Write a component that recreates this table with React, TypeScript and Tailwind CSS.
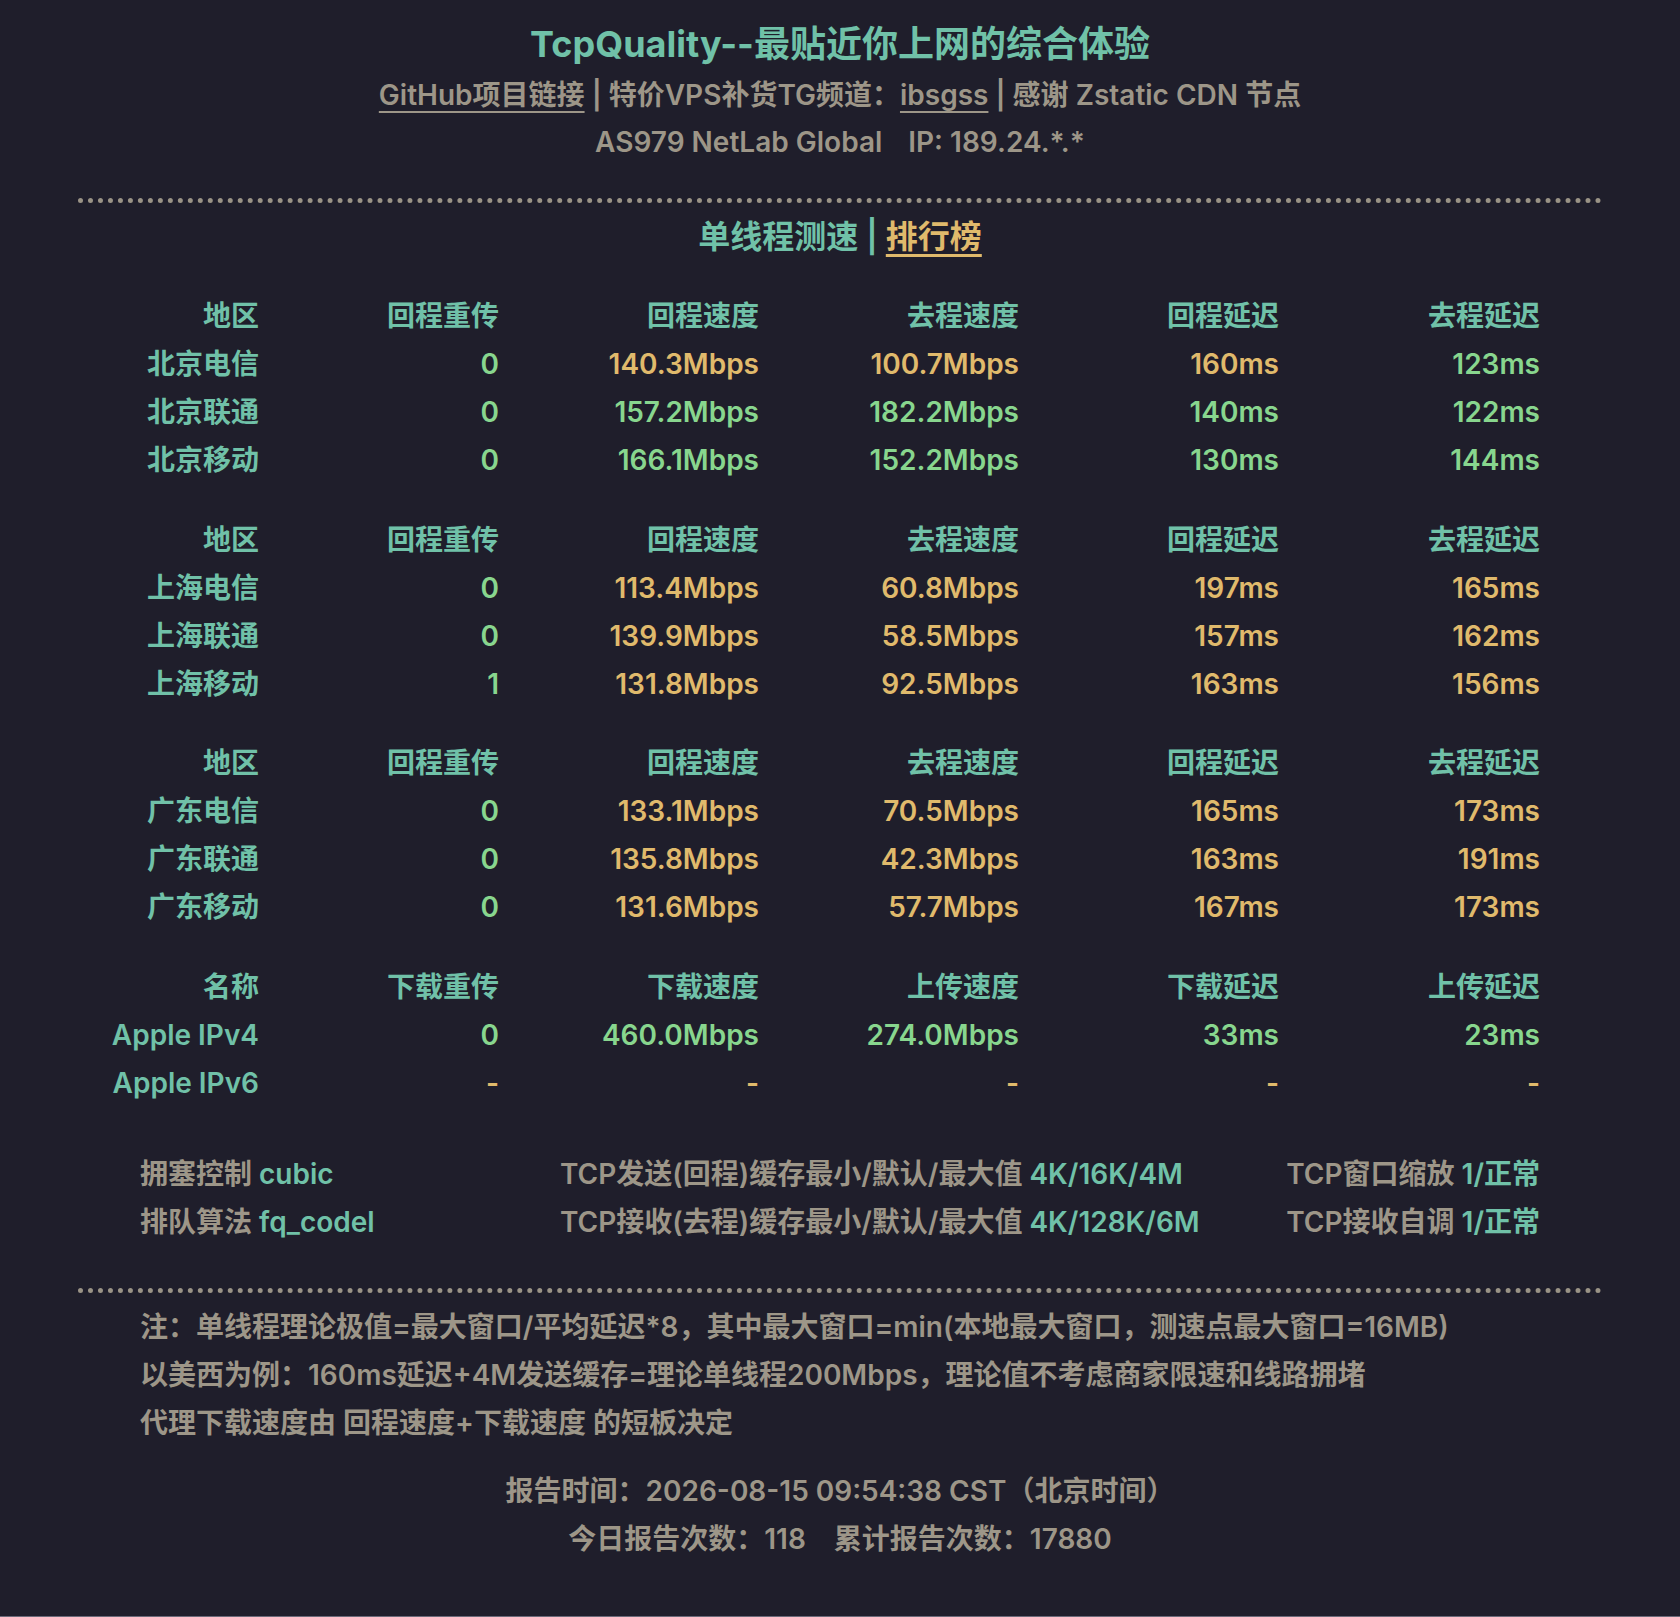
import React from 'react';

const TEAL = 'text-[#70c1a8]';
const GOLD = 'text-[#e0ba6c]';
const GREEN = 'text-[#88d68e]';
const GRAY = 'text-[#9d9688]';

type Row = [string, string, string, string, string, string];

const groups: { head: Row; rows: Row[] }[] = [
  {
    head: ['地区', '回程重传', '回程速度', '去程速度', '回程延迟', '去程延迟'],
    rows: [
      ['北京电信', '0', '140.3Mbps', '100.7Mbps', '160ms', '123ms'],
      ['北京联通', '0', '157.2Mbps', '182.2Mbps', '140ms', '122ms'],
      ['北京移动', '0', '166.1Mbps', '152.2Mbps', '130ms', '144ms'],
    ],
  },
  {
    head: ['地区', '回程重传', '回程速度', '去程速度', '回程延迟', '去程延迟'],
    rows: [
      ['上海电信', '0', '113.4Mbps', '60.8Mbps', '197ms', '165ms'],
      ['上海联通', '0', '139.9Mbps', '58.5Mbps', '157ms', '162ms'],
      ['上海移动', '1', '131.8Mbps', '92.5Mbps', '163ms', '156ms'],
    ],
  },
  {
    head: ['地区', '回程重传', '回程速度', '去程速度', '回程延迟', '去程延迟'],
    rows: [
      ['广东电信', '0', '133.1Mbps', '70.5Mbps', '165ms', '173ms'],
      ['广东联通', '0', '135.8Mbps', '42.3Mbps', '163ms', '191ms'],
      ['广东移动', '0', '131.6Mbps', '57.7Mbps', '167ms', '173ms'],
    ],
  },
  {
    head: ['名称', '下载重传', '下载速度', '上传速度', '下载延迟', '上传延迟'],
    rows: [
      ['Apple IPv4', '0', '460.0Mbps', '274.0Mbps', '33ms', '23ms'],
      ['Apple IPv6', '-', '-', '-', '-', '-'],
    ],
  },
];

function tone(v: string, col: number) {
  if (v === '-') return GOLD;
  const n = parseFloat(v);
  if (col === 1) return n <= 1 ? GREEN : GOLD;
  if (col === 2 || col === 3) return n > 150 ? GREEN : GOLD;
  return n < 150 ? GREEN : GOLD;
}

const widths = ['w-[119px]', 'w-[240px]', 'w-[260px]', 'w-[260px]', 'w-[260px]', 'w-[261px]'];

function TableRow({ cells, head }: { cells: Row; head?: boolean }) {
  return (
    <div className="flex h-[48px] items-center">
      {cells.map((c, i) => (
        <div
          key={i}
          className={`${widths[i]} flex justify-end whitespace-nowrap ${
            head || i === 0 ? TEAL : tone(c, i)
          }`}
        >
          {c}
        </div>
      ))}
    </div>
  );
}

function Dots({ className = '' }: { className?: string }) {
  return <div className={`mx-[78px] border-t-[5px] border-dotted border-[#9a9386] ${className}`} />;
}

export default function App() {
  return (
    <div
      className="min-h-[1617px] bg-[#1f1e2b] border-b border-[#6a6979] font-semibold"
      style={{ fontFamily: 'Inter, "Noto Sans CJK SC", sans-serif' }}
    >
      {/* header */}
      <div className="pt-[21px] text-center">
        <h1 className={`text-[36px] leading-[47px] font-bold ${TEAL}`}>TcpQuality--最贴近你上网的综合体验</h1>
        <div className={`mt-[5px] text-[28px] leading-[44px] ${GRAY}`}>
          <span className="underline underline-offset-[6px]">GitHub项目链接</span>
          <span> | 特价VPS补货TG频道：</span>
          <span className="underline underline-offset-[6px]">ibsgss</span>
          <span> | 感谢 Zstatic CDN 节点</span>
        </div>
        <div className={`mt-[3px] text-[28px] leading-[44px] ${GRAY}`}>
          AS979 NetLab Global<span className="ml-[26px]">IP: 189.24.*.*</span>
        </div>
      </div>

      <Dots className="mt-[34px]" />

      <div className="mt-[12px] text-center text-[32px] leading-[44px]">
        <span className={TEAL}>单线程测速 | </span>
        <span className={`${GOLD} underline underline-offset-[6px]`}>排行榜</span>
      </div>

      {/* speed table */}
      <div className="mt-[33px] flex flex-col items-center gap-[31.5px] text-[28px]">
        {groups.map((g, gi) => (
          <div key={gi}>
            <TableRow cells={g.head} head />
            {g.rows.map((r, ri) => (
              <TableRow key={ri} cells={r} />
            ))}
          </div>
        ))}
      </div>

      {/* kernel params */}
      <div className={`mx-auto mt-[43px] w-[1400px] text-[28px] leading-[48px] ${GRAY}`}>
        <div className="grid grid-cols-[420px_1fr_auto]">
          <div>
            拥塞控制 <span className={TEAL}>cubic</span>
          </div>
          <div>
            TCP发送(回程)缓存最小/默认/最大值 <span className={TEAL}>4K/16K/4M</span>
          </div>
          <div>
            TCP窗口缩放 <span className={TEAL}>1/正常</span>
          </div>
          <div>
            排队算法 <span className={TEAL}>fq_codel</span>
          </div>
          <div>
            TCP接收(去程)缓存最小/默认/最大值 <span className={TEAL}>4K/128K/6M</span>
          </div>
          <div>
            TCP接收自调 <span className={TEAL}>1/正常</span>
          </div>
        </div>
      </div>

      <Dots className="mt-[42px]" />

      <div className={`mx-auto mt-[10px] w-[1400px] text-[28px] leading-[48px] ${GRAY}`}>
        <div>注：单线程理论极值=最大窗口/平均延迟*8，其中最大窗口=min(本地最大窗口，测速点最大窗口=16MB)</div>
        <div>以美西为例：160ms延迟+4M发送缓存=理论单线程200Mbps，理论值不考虑商家限速和线路拥堵</div>
        <div>代理下载速度由 回程速度+下载速度 的短板决定</div>
      </div>

      <div className={`mt-[20px] text-center text-[28px] leading-[48px] ${GRAY}`}>
        <div>报告时间：2026-08-15 09:54:38 CST（北京时间）</div>
        <div>
          今日报告次数：118<span className="ml-[28px]">累计报告次数：17880</span>
        </div>
      </div>
    </div>
  );
}
